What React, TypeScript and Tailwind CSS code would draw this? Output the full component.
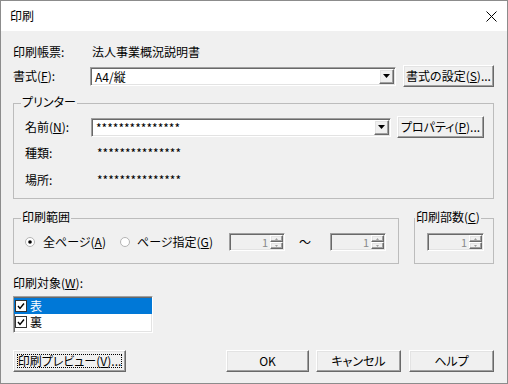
import React from "react";

const sunken =
  "border border-t-[#a0a0a0] border-l-[#a0a0a0] border-b-white border-r-white shadow-[inset_1px_1px_0_#696969,inset_-1px_-1px_0_#e3e3e3]";
const raised =
  "border border-t-white border-l-white border-b-[#696969] border-r-[#696969] shadow-[inset_-1px_-1px_0_#a0a0a0,inset_1px_1px_0_#e3e3e3]";

function Button({ children, className = "", focus = false }: { children: React.ReactNode; className?: string; focus?: boolean }) {
  return (
    <button className={`${raised} bg-[#f0f0f0] h-[22px] flex items-center justify-center text-black whitespace-nowrap ${focus ? "p-[3px]" : ""} ${className}`}>
      {focus ? (
        <span className="w-full h-full border border-dotted border-black flex items-center justify-center whitespace-nowrap">{children}</span>
      ) : (
        children
      )}
    </button>
  );
}

function Combo({ value, className = "" }: { value: string; className?: string }) {
  return (
    <div className={`${sunken} bg-white h-[19px] flex items-stretch p-[1px] ${className}`}>
      <span className="flex-1 pl-[3px] leading-[15px] text-black">{value}</span>
      <span className={`${raised} bg-[#f0f0f0] w-[15px] flex items-center justify-center`}>
        <svg width="7" height="4" viewBox="0 0 7 4">
          <path d="M0 0 H7 L3.5 4 Z" fill="#000" />
        </svg>
      </span>
    </div>
  );
}

function Spin({ className = "" }: { className?: string }) {
  return (
    <div className={`${sunken} bg-[#f0f0f0] h-[18px] flex items-stretch justify-end p-[1px] ${className}`}>
      <span className="pr-[2px] leading-[14px] text-[11px] text-[#8a8a8a]">1</span>
      <span className="w-[13px] flex flex-col">
        <span className={`${raised} flex-1 flex items-center justify-center`}>
          <svg width="3" height="2" viewBox="0 0 3 2">
            <path d="M1.5 0 L3 2 H0 Z" fill="#a0a0a0" />
          </svg>
        </span>
        <span className={`${raised} flex-1 flex items-center justify-center`}>
          <svg width="3" height="2" viewBox="0 0 3 2">
            <path d="M0 0 H3 L1.5 2 Z" fill="#a0a0a0" />
          </svg>
        </span>
      </span>
    </div>
  );
}

function Radio({ checked }: { checked?: boolean }) {
  return (
    <svg width="12" height="12" viewBox="0 0 12 12">
      <circle cx="6" cy="6" r="4.5" fill="#fff" stroke="#b4b4b4" />
      {checked && <circle cx="6" cy="6" r="1.8" fill="#000" />}
    </svg>
  );
}

function Check() {
  return (
    <svg width="12" height="12" viewBox="0 0 12 12">
      <rect x="0.5" y="0.5" width="11" height="11" fill="#fff" stroke="#333" />
      <path d="M3 6 L5 8.5 L9 3.5" fill="none" stroke="#000" strokeWidth="1.4" />
    </svg>
  );
}

export default function App() {
  return (
    <div className="w-[508px] h-[384px] border border-[#8c8c8c] bg-[#f0f0f0] flex flex-col overflow-hidden whitespace-nowrap text-[12px] text-black [font-family:'Noto_Sans_CJK_JP',sans-serif] [font-feature-settings:'palt']">
      <div className="h-[30px] bg-white flex items-center justify-between pl-[9px] pr-[10px]">
        <span>印刷</span>
        <svg width="11" height="11" viewBox="0 0 11 11">
          <path d="M0.5 0.5 L10.5 10.5 M10.5 0.5 L0.5 10.5" stroke="#000" strokeWidth="1" />
        </svg>
      </div>

      <div className="flex flex-col pl-[12px] pr-[13px]">
        <div className="mt-[11px] h-[20px] flex items-center">
          <span className="w-[79px]">印刷帳票:</span>
          <span>法人事業概況説明書</span>
        </div>

        <div className="mt-[3px] h-[22px] flex items-center">
          <span className="w-[77px]">
            書式(<u>F</u>):
          </span>
          <Combo value="A4/縦" className="w-[306px]" />
          <Button className="ml-[7px] w-[91px]">
            書式の設定(<u>S</u>)...
          </Button>
        </div>

        <div className="relative mt-[16px] h-[96px] border border-[#bcbcbc] pl-[11px] flex flex-col">
          <span className="absolute left-[7px] top-[-9px] px-[1px] leading-[14px] bg-[#f0f0f0]">プリンター</span>
          <div className="mt-[12px] h-[22px] flex items-center">
            <span className="w-[66px]">
              名前(<u>N</u>):
            </span>
            <Combo value="***************" className="w-[300px]" />
            <Button className="ml-[6px] w-[87px]">
              プロパティ(<u>P</u>)...
            </Button>
          </div>
          <div className="mt-[5px] h-[20px] flex items-center">
            <span className="w-[72px]">種類:</span>
            <span>***************</span>
          </div>
          <div className="mt-[7px] h-[20px] flex items-center">
            <span className="w-[72px]">場所:</span>
            <span>***************</span>
          </div>
        </div>

        <div className="mt-[19px] flex">
          <div className="relative w-[386px] h-[46px] border border-[#bcbcbc]">
            <span className="absolute left-[7px] top-[-9px] px-[1px] leading-[14px] bg-[#f0f0f0]">印刷範囲</span>
            <div className="mt-[13px] h-[20px] flex items-center pl-[10px]">
              <div className="w-[95px] flex items-center gap-[7px]">
                <Radio checked />
                <span>
                  全ページ(<u>A</u>)
                </span>
              </div>
              <div className="w-[110px] flex items-center gap-[6px]">
                <Radio />
                <span>
                  ページ指定(<u>G</u>)
                </span>
              </div>
              <Spin className="w-[56px]" />
              <span className="w-[45px] pl-[14px]">～</span>
              <Spin className="w-[56px]" />
            </div>
          </div>

          <div className="relative ml-[15px] flex-1 h-[46px] border border-[#bcbcbc]">
            <span className="absolute left-0 top-[-9px] px-[1px] leading-[14px] bg-[#f0f0f0]">
              印刷部数(<u>C</u>)
            </span>
            <div className="mt-[13px] h-[20px] flex items-center pl-[12px]">
              <Spin className="w-[57px]" />
            </div>
          </div>
        </div>

        <div className="mt-[11px] h-[16px] flex items-center">
          <span>
            印刷対象(<u>W</u>):
          </span>
        </div>

        <div className={`${sunken} mt-[5px] w-[140px] h-[37px] bg-white flex flex-col`}>
          <div className="mt-[1px] h-[16px] bg-[#0078d7] text-white flex items-center gap-[3px] pl-[1px]">
            <Check />
            <span>表</span>
          </div>
          <div className="h-[16px] flex items-center gap-[3px] pl-[1px]">
            <Check />
            <span>裏</span>
          </div>
        </div>

        <div className="mt-[17px] flex">
          <Button focus className="w-[113px]">
            印刷プレビュー(<u>V</u>)...
          </Button>
          <Button className="ml-[100px] w-[83px]">OK</Button>
          <Button className="ml-[7px] w-[85px]">キャンセル</Button>
          <Button className="ml-[8px] w-[85px]">ヘルプ</Button>
        </div>
      </div>
    </div>
  );
}
